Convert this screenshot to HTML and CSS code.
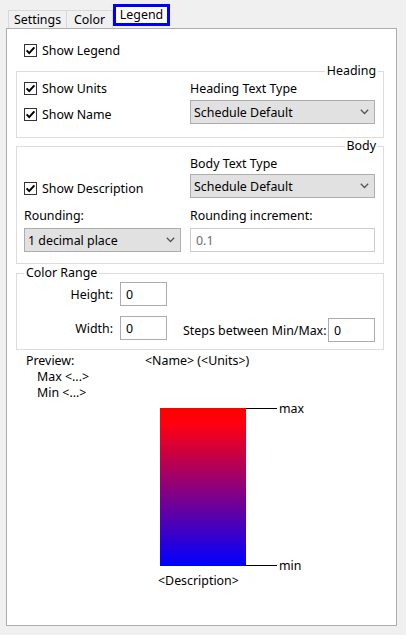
FILE: index.html
```html
<!DOCTYPE html>
<html>
<head>
<meta charset="utf-8">
<link rel="stylesheet" href="styles.css">
</head>
<body>
<div class="tabs">
  <div class="tab tab-settings">Settings</div>
  <div class="tab tab-color">Color</div>
  <div class="tab tab-active">Legend</div>
</div>
<div class="panel">
  <div class="check show-legend"><span class="box"><svg width="11" height="11" viewBox="0 0 11 11"><path d="M1.6 5.4 L4.2 8.1 L9.4 2.3" fill="none" stroke="#000" stroke-width="2"/></svg></span><span class="txt">Show Legend</span></div>

  <div class="group group-heading">
    <div class="group-title title-right">Heading</div>
    <div class="cols heading-cols">
      <div class="col-left heading-left">
        <div class="check"><span class="box"><svg width="11" height="11" viewBox="0 0 11 11"><path d="M1.6 5.4 L4.2 8.1 L9.4 2.3" fill="none" stroke="#000" stroke-width="2"/></svg></span><span class="txt">Show Units</span></div>
        <div class="check"><span class="box"><svg width="11" height="11" viewBox="0 0 11 11"><path d="M1.6 5.4 L4.2 8.1 L9.4 2.3" fill="none" stroke="#000" stroke-width="2"/></svg></span><span class="txt">Show Name</span></div>
      </div>
      <div class="col-right">
        <div class="label">Heading Text Type</div>
        <div class="select heading-select"><span>Schedule Default</span><svg width="9" height="6" viewBox="0 0 9 6"><path d="M0.8 0.8 L4.5 4.5 L8.2 0.8" fill="none" stroke="#555" stroke-width="1.3"/></svg></div>
      </div>
    </div>
  </div>

  <div class="group group-body">
    <div class="group-title title-right">Body</div>
    <div class="cols body-top">
      <div class="col-left body-left">
        <div class="check"><span class="box"><svg width="11" height="11" viewBox="0 0 11 11"><path d="M1.6 5.4 L4.2 8.1 L9.4 2.3" fill="none" stroke="#000" stroke-width="2"/></svg></span><span class="txt">Show Description</span></div>
      </div>
      <div class="col-right">
        <div class="label">Body Text Type</div>
        <div class="select body-select"><span>Schedule Default</span><svg width="9" height="6" viewBox="0 0 9 6"><path d="M0.8 0.8 L4.5 4.5 L8.2 0.8" fill="none" stroke="#555" stroke-width="1.3"/></svg></div>
      </div>
    </div>
    <div class="cols body-bottom">
      <div class="col-left">
        <div class="label">Rounding:</div>
        <div class="select rounding-select"><span>1 decimal place</span><svg width="9" height="6" viewBox="0 0 9 6"><path d="M0.8 0.8 L4.5 4.5 L8.2 0.8" fill="none" stroke="#555" stroke-width="1.3"/></svg></div>
      </div>
      <div class="col-right">
        <div class="label">Rounding increment:</div>
        <div class="input input-disabled">0.1</div>
      </div>
    </div>
  </div>

  <div class="group group-color">
    <div class="group-title title-left">Color Range</div>
    <div class="cr-row cr-row1">
      <div class="cr-label">Height:</div>
      <div class="input small-input">0</div>
    </div>
    <div class="cr-row cr-row2">
      <div class="cr-label">Width:</div>
      <div class="input small-input">0</div>
      <div class="steps">
        <div class="steps-label">Steps between Min/Max:</div>
        <div class="input small-input">0</div>
      </div>
    </div>
  </div>

  <div class="preview">
    <div class="preview-head">
      <div class="preview-title">Preview:</div>
      <div>&lt;Name&gt; (&lt;Units&gt;)</div>
    </div>
    <div class="minmax">
      <div>Max &lt;...&gt;</div>
      <div>Min &lt;...&gt;</div>
    </div>
    <div class="chart">
      <div class="gradient"></div>
      <div class="markers">
        <div class="marker marker-top"><span class="line"></span><span class="mlabel">max</span></div>
        <div class="marker marker-bottom"><span class="line"></span><span class="mlabel">min</span></div>
      </div>
    </div>
    <div class="description">&lt;Description&gt;</div>
  </div>
</div>
</body>
</html>
```
FILE: styles.css
```css
* { box-sizing: border-box; }

body {
  margin: 0;
  background: #f0f0f0;
  font-family: "Noto Sans", "DejaVu Sans", sans-serif;
  font-size: 12.4px;
  line-height: 16px;
  color: #000;
}

.tabs {
  display: flex;
  align-items: flex-end;
  height: 28px;
  padding-left: 8px;
}

.tab {
  height: 18px;
  border: 1px solid #d9d9d9;
  border-bottom: none;
  text-align: center;
  line-height: 17px;
  background: #f0f0f0;
}

.tab-settings { width: 59px; }
.tab-color { width: 46px; border-left: none; }

.tab-active {
  width: 57px;
  height: 22px;
  margin-bottom: 2px;
  border: 3px solid #0000ff;
  background: #fff;
  line-height: 16px;
}

.panel {
  margin-left: 6px;
  width: 391px;
  height: 598px;
  border: 1px solid #adadad;
  background: #fff;
  padding-top: 13px;
}

.check {
  display: flex;
  align-items: center;
  height: 16px;
  gap: 5px;
  white-space: nowrap;
}

.txt { padding-top: 2px; }

.box {
  width: 13px;
  height: 13px;
  border: 1px solid #333;
  background: #fff;
  display: flex;
  align-items: center;
  justify-content: center;
  flex: none;
}

.box svg { display: block; }

.show-legend { margin-left: 17px; }

.group {
  margin-left: 9px;
  width: 368px;
  border: 1px solid #dcdcdc;
  display: flex;
  flex-direction: column;
}

.group-title {
  line-height: 16px;
  margin-top: -9px;
  margin-bottom: -7px;
  background: #fff;
  padding: 0 2px;
}

.title-right { align-self: flex-end; margin-right: 5px; }
.title-left { align-self: flex-start; margin-left: 7px; }

.cols { display: flex; }

.col-left {
  width: 173px;
  padding-left: 7px;
  display: flex;
  flex-direction: column;
}

.col-right {
  width: 185px;
  display: flex;
  flex-direction: column;
}

.heading-cols { padding-top: 8px; padding-bottom: 13px; }
.heading-left { gap: 10px; }
.heading-select { margin-top: 4px; }

.group-heading { margin-top: 13px; }
.group-body { margin-top: 8px; }
.group-color { margin-top: 9px; }

.body-top { padding-top: 8px; }
.body-left { padding-top: 25px; }
.body-select { margin-top: 3px; }
.body-bottom { margin-top: 9px; padding-bottom: 11px; }

.label { line-height: 16px; padding-top: 1px; height: 16px; white-space: nowrap; }

.select {
  height: 24px;
  background: #e1e1e1;
  border: 1px solid #adadad;
  display: flex;
  align-items: center;
  justify-content: space-between;
  padding: 1px 5px 0 3px;
  white-space: nowrap;
}

.select svg { display: block; margin-top: -1px; }

.rounding-select { width: 157px; margin-top: 5px; }

.input {
  height: 24px;
  background: #fff;
  border: 1px solid #acacac;
  display: flex;
  align-items: center;
  padding: 1px 0 0 5px;
}

.input-disabled {
  margin-top: 5px;
  border-color: #cccccc;
  color: #6d6d6d;
}

.small-input { width: 47px; flex: none; }

.cr-row { display: flex; align-items: flex-start; }
.cr-row1 { margin-top: 8px; }
.cr-row2 { margin-top: 10px; padding-bottom: 7px; }

.cr-label {
  width: 96px;
  height: 24px;
  margin-right: 7px;
  text-align: right;
  line-height: 24px;
  padding-top: 1px;
}

.steps {
  display: flex;
  margin-left: 16px;
  margin-top: 2px;
}

.steps-label {
  width: 145px;
  height: 24px;
  padding-right: 3px;
  padding-top: 1px;
  text-align: right;
  line-height: 24px;
  white-space: nowrap;
}

.preview {
  padding-left: 19px;
  margin-top: 3px;
}

.preview-head { display: flex; }
.preview-title { width: 119px; }

.minmax { padding-left: 11px; }

.chart {
  display: flex;
  margin-left: 134px;
  margin-top: 7px;
}

.gradient {
  width: 86px;
  height: 158px;
  background: linear-gradient(to bottom, #ff0000 0%, #ff0010 10%, #0000ff 100%);
}

.markers {
  display: flex;
  flex-direction: column;
  justify-content: space-between;
}

.marker {
  display: flex;
  align-items: center;
  height: 17px;
}

.marker-top { margin-top: -8px; }
.marker-bottom { margin-bottom: -8px; }

.line {
  width: 31px;
  height: 1px;
  background: #000;
}

.mlabel { margin-left: 2px; padding-top: 1px; }

.description {
  margin-left: 132px;
  margin-top: 7px;
}
```
